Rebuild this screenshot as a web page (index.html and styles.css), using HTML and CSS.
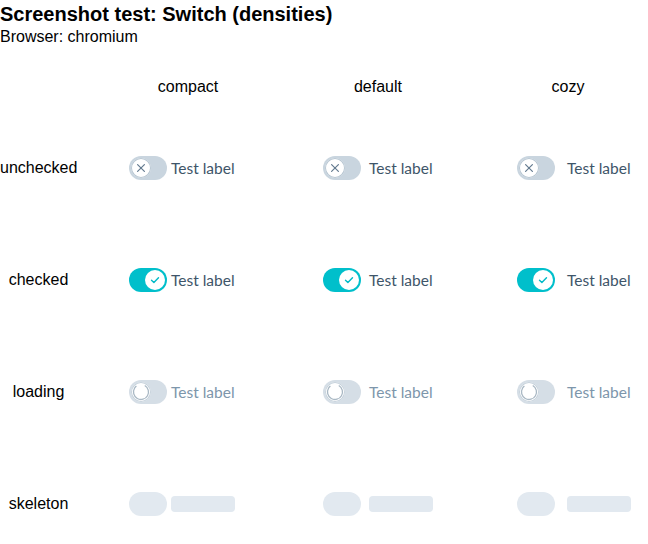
FILE: index.html
```html
<!DOCTYPE html>
<html>
<head>
<meta charset="utf-8">
<link rel="stylesheet" href="styles.css">
</head>
<body>
<h1 class="title">Screenshot test: Switch (densities)</h1>
<p class="subtitle">Browser: chromium</p>
<div class="grid">
  <div></div>
  <div class="head head-compact">compact</div>
  <div class="head head-default">default</div>
  <div class="head head-cozy">cozy</div>

  <div class="rowlabel">unchecked</div>
  <div class="cell"><div class="switch gap-compact"><span class="track"><span class="knob"><svg viewBox="0 0 20 20" width="20" height="20"><path d="M6.6 6.6l6.8 6.8M13.4 6.6l-6.8 6.8" stroke="#647b90" stroke-width="1.2" stroke-linecap="round" fill="none"/></svg></span></span><span class="label">Test label</span></div></div>
  <div class="cell"><div class="switch gap-default"><span class="track"><span class="knob"><svg viewBox="0 0 20 20" width="20" height="20"><path d="M6.6 6.6l6.8 6.8M13.4 6.6l-6.8 6.8" stroke="#647b90" stroke-width="1.2" stroke-linecap="round" fill="none"/></svg></span></span><span class="label">Test label</span></div></div>
  <div class="cell"><div class="switch gap-cozy"><span class="track"><span class="knob"><svg viewBox="0 0 20 20" width="20" height="20"><path d="M6.6 6.6l6.8 6.8M13.4 6.6l-6.8 6.8" stroke="#647b90" stroke-width="1.2" stroke-linecap="round" fill="none"/></svg></span></span><span class="label">Test label</span></div></div>

  <div class="rowlabel">checked</div>
  <div class="cell"><div class="switch gap-compact"><span class="track on"><span class="knob"><svg viewBox="0 0 20 20" width="20" height="20"><path d="M6.5 10.2l2.4 2.4 4.6-4.8" stroke="#00bac7" stroke-width="1.4" stroke-linecap="round" stroke-linejoin="round" fill="none"/></svg></span></span><span class="label">Test label</span></div></div>
  <div class="cell"><div class="switch gap-default"><span class="track on"><span class="knob"><svg viewBox="0 0 20 20" width="20" height="20"><path d="M6.5 10.2l2.4 2.4 4.6-4.8" stroke="#00bac7" stroke-width="1.4" stroke-linecap="round" stroke-linejoin="round" fill="none"/></svg></span></span><span class="label">Test label</span></div></div>
  <div class="cell"><div class="switch gap-cozy"><span class="track on"><span class="knob"><svg viewBox="0 0 20 20" width="20" height="20"><path d="M6.5 10.2l2.4 2.4 4.6-4.8" stroke="#00bac7" stroke-width="1.4" stroke-linecap="round" stroke-linejoin="round" fill="none"/></svg></span></span><span class="label">Test label</span></div></div>

  <div class="rowlabel">loading</div>
  <div class="cell"><div class="switch gap-compact"><span class="track loading"><span class="knob"><svg viewBox="0 0 20 20" width="20" height="20"><circle cx="10" cy="10" r="7.5" stroke="#a9b8c4" stroke-width="1.3" fill="none" stroke-dasharray="38 9.1" transform="rotate(-60 10 10)"/></svg></span></span><span class="label muted">Test label</span></div></div>
  <div class="cell"><div class="switch gap-default"><span class="track loading"><span class="knob"><svg viewBox="0 0 20 20" width="20" height="20"><circle cx="10" cy="10" r="7.5" stroke="#a9b8c4" stroke-width="1.3" fill="none" stroke-dasharray="38 9.1" transform="rotate(-60 10 10)"/></svg></span></span><span class="label muted">Test label</span></div></div>
  <div class="cell"><div class="switch gap-cozy"><span class="track loading"><span class="knob"><svg viewBox="0 0 20 20" width="20" height="20"><circle cx="10" cy="10" r="7.5" stroke="#a9b8c4" stroke-width="1.3" fill="none" stroke-dasharray="38 9.1" transform="rotate(-60 10 10)"/></svg></span></span><span class="label muted">Test label</span></div></div>

  <div class="rowlabel">skeleton</div>
  <div class="cell"><div class="switch gap-compact"><span class="sk-pill"></span><span class="sk-bar"></span></div></div>
  <div class="cell"><div class="switch gap-default"><span class="sk-pill"></span><span class="sk-bar"></span></div></div>
  <div class="cell"><div class="switch gap-cozy"><span class="sk-pill"></span><span class="sk-bar"></span></div></div>
</div>
</body>
</html>
```

FILE: styles.css
```css
html, body {
  margin: 0;
  padding: 0;
  background: #ffffff;
}
body {
  font-family: "Liberation Sans", Arial, sans-serif;
  color: #000000;
}
.title {
  margin: 0;
  font-size: 20px;
  line-height: 28px;
  font-weight: bold;
}
.subtitle {
  margin: 0;
  font-size: 16px;
  line-height: 18px;
}
.grid {
  margin-top: 16px;
  display: grid;
  grid-template-columns: 129px 194px 194px 131px;
  grid-template-rows: 50px 112px 112px 112px 80px;
}
.head {
  align-self: center;
  justify-self: start;
  text-align: center;
  font-size: 16px;
  line-height: 18px;
}
.head-compact { width: 118px; }
.head-default { width: 110px; }
.head-cozy { width: 102px; }
.rowlabel {
  width: 77px;
  text-align: center;
  font-size: 16px;
  line-height: 24px;
  margin-top: 44px;
  align-self: start;
}
.cell {
  margin-top: 44px;
  align-self: start;
}
.switch {
  display: flex;
  align-items: center;
  height: 24px;
}
.gap-compact { gap: 4px; }
.gap-default { gap: 8px; }
.gap-cozy { gap: 12px; }
.track {
  width: 38px;
  height: 24px;
  border-radius: 12px;
  background: #c9d5df;
  display: flex;
  align-items: center;
  padding: 0 2px;
  box-sizing: border-box;
  flex: none;
}
.track.on {
  background: #00bfcb;
  justify-content: flex-end;
}
.track.loading {
  background: #d5dee6;
}
.knob {
  width: 20px;
  height: 20px;
  border-radius: 50%;
  background: #ffffff;
  box-shadow: 0 0 0 1px #b7c6d2 inset;
  display: flex;
}
.track.on .knob {
  box-shadow: none;
}
.track.loading .knob {
  box-shadow: 0 0 0 1px #c5d1db inset;
}
.label {
  font-family: Lato, "Open Sans", sans-serif;
  font-size: 15.5px;
  line-height: 22px;
  color: #3e5569;
}
.label.muted {
  color: #7d96ab;
}
.sk-pill {
  width: 38px;
  height: 24px;
  border-radius: 12px;
  background: #e2e9f0;
  flex: none;
}
.sk-bar {
  width: 64px;
  height: 16px;
  border-radius: 4px;
  background: #e2e9f0;
}
```
